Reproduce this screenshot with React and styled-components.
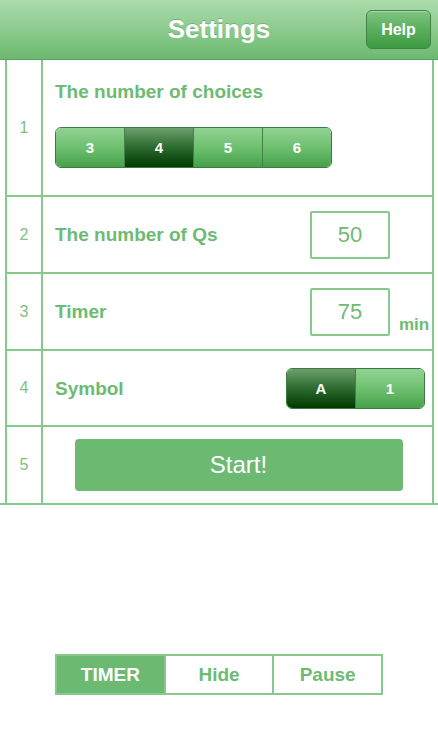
import React, { useState } from 'react';
import styled, { createGlobalStyle, css } from 'styled-components';

const GlobalStyle = createGlobalStyle`
  html, body {
    margin: 0;
    padding: 0;
    background: #ffffff;
    font-family: "Liberation Sans", Arial, sans-serif;
  }
`

const green = '#6dbb73'
const line = '#86c98a'

const Page = styled.div`
  width: 438px;
  min-height: 750px;
  background: #fff;
`

const Header = styled.header`
  display: grid;
  grid-template-columns: 1fr auto 1fr;
  align-items: center;
  height: 60px;
  padding: 0 7px;
  box-sizing: border-box;
  background: linear-gradient(to bottom, #acdcac 0%, #8fcc91 45%, #6cb96f 100%);
  border-bottom: 1px solid #5e9e62;
`

const Title = styled.h1`
  grid-column: 2;
  margin: 0;
  font-size: 26px;
  font-weight: 700;
  color: #fff;
  text-shadow: 0 -1px 0 rgba(60, 120, 60, 0.35);
`

const HelpButton = styled.button`
  grid-column: 3;
  justify-self: end;
  width: 65px;
  height: 39px;
  border-radius: 6px;
  border: 1px solid #3f8443;
  background: linear-gradient(to bottom, #7fc581 0%, #5bae5e 50%, #3e9a42 100%);
  box-shadow: inset 0 1px 0 rgba(255, 255, 255, 0.35);
  color: #fff;
  font-family: inherit;
  font-size: 16px;
  font-weight: 700;
  padding: 0;
`

const Table = styled.section`
  border-bottom: 2px solid ${line};
`

const Row = styled.div`
  display: grid;
  grid-template-columns: 36px 1fr;
  height: ${p => p.$h}px;
  margin: 0 4px 0 5px;
  border-left: 2px solid ${line};
  border-right: 2px solid ${line};
  box-sizing: border-box;
  ${p => !p.$last && css`border-bottom: 2px solid ${line};`}
`

const Num = styled.div`
  display: flex;
  align-items: center;
  justify-content: center;
  border-right: 2px solid ${line};
  color: #7cc281;
  font-size: 16px;
`

const Cell = styled.div`
  display: flex;
  align-items: center;
  padding-left: 12px;
  ${p => p.$stack && css`
    flex-direction: column;
    align-items: flex-start;
    padding-top: 20px;
  `}
  ${p => p.$center && css`
    justify-content: center;
    padding-left: 0;
  `}
`

const Label = styled.div`
  flex: ${p => p.$fill ? 1 : 'none'};
  font-size: 19px;
  font-weight: 700;
  color: ${green};
  line-height: 23px;
`

const Segmented = styled.div`
  display: flex;
  height: 39px;
  margin-top: ${p => p.$mt || 0}px;
  margin-right: ${p => p.$mr || 0}px;
  border: 1px solid #3d7a40;
  border-radius: 6px;
  overflow: hidden;
`

const Segment = styled.div`
  width: ${p => p.$w}px;
  display: flex;
  align-items: center;
  justify-content: center;
  color: #fff;
  font-size: 15px;
  font-weight: 700;
  & + & {
    border-left: 1px solid #3f8443;
  }
  background: ${p => p.$on
    ? 'linear-gradient(to bottom, #6c9f6c 0%, #2c6a2e 50%, #003a00 100%)'
    : 'linear-gradient(to bottom, #93d294 0%, #6ec070 50%, #45a14a 100%)'};
`

const NumBox = styled.div`
  width: 80px;
  height: 48px;
  box-sizing: border-box;
  border: 2px solid ${line};
  border-radius: 2px;
  display: flex;
  align-items: center;
  justify-content: center;
  color: ${green};
  font-size: 22px;
`

const Unit = styled.div`
  width: 42px;
  align-self: flex-end;
  padding: 0 0 14px 9px;
  box-sizing: border-box;
  color: ${green};
  font-size: 17px;
  font-weight: 700;
`

const StartButton = styled.button`
  width: 328px;
  height: 52px;
  margin-left: 2px;
  border: none;
  border-radius: 4px;
  background: #6cba72;
  color: #fff;
  font-family: inherit;
  font-size: 24px;
`

const Tabs = styled.nav`
  display: flex;
  width: 328px;
  height: 41px;
  margin: 149px auto 0;
  border: 2px solid ${line};
  box-sizing: border-box;
`

const Tab = styled.div`
  flex: 1;
  display: flex;
  align-items: center;
  justify-content: center;
  font-size: 19px;
  font-weight: 700;
  color: ${p => p.$on ? '#fff' : green};
  background: ${p => p.$on ? '#6cba72' : '#fff'};
  & + & {
    border-left: 2px solid ${line};
  }
`

export default function App() {
  const [choices, setChoices] = useState(4)
  const [symbol, setSymbol] = useState('A')
  const [tab, setTab] = useState('TIMER')

  return (
    <Page>
      <GlobalStyle />
      <Header>
        <Title>Settings</Title>
        <HelpButton>Help</HelpButton>
      </Header>

      <Table>
        <Row $h={137}>
          <Num>1</Num>
          <Cell $stack>
            <Label>The number of choices</Label>
            <Segmented $mt={24}>
              {[3, 4, 5, 6].map(n => (
                <Segment key={n} $w={68} $on={choices === n} onClick={() => setChoices(n)}>{n}</Segment>
              ))}
            </Segmented>
          </Cell>
        </Row>
        <Row $h={77}>
          <Num>2</Num>
          <Cell>
            <Label $fill>The number of Qs</Label>
            <NumBox>50</NumBox>
            <Unit />
          </Cell>
        </Row>
        <Row $h={77}>
          <Num>3</Num>
          <Cell>
            <Label $fill>Timer</Label>
            <NumBox>75</NumBox>
            <Unit>min</Unit>
          </Cell>
        </Row>
        <Row $h={76}>
          <Num>4</Num>
          <Cell>
            <Label $fill>Symbol</Label>
            <Segmented $mr={7}>
              {['A', '1'].map(s => (
                <Segment key={s} $w={68} $on={symbol === s} onClick={() => setSymbol(s)}>{s}</Segment>
              ))}
            </Segmented>
          </Cell>
        </Row>
        <Row $h={76} $last>
          <Num>5</Num>
          <Cell $center>
            <StartButton>Start!</StartButton>
          </Cell>
        </Row>
      </Table>

      <Tabs>
        {['TIMER', 'Hide', 'Pause'].map(t => (
          <Tab key={t} $on={tab === t} onClick={() => setTab(t)}>{t}</Tab>
        ))}
      </Tabs>
    </Page>
  )
}
